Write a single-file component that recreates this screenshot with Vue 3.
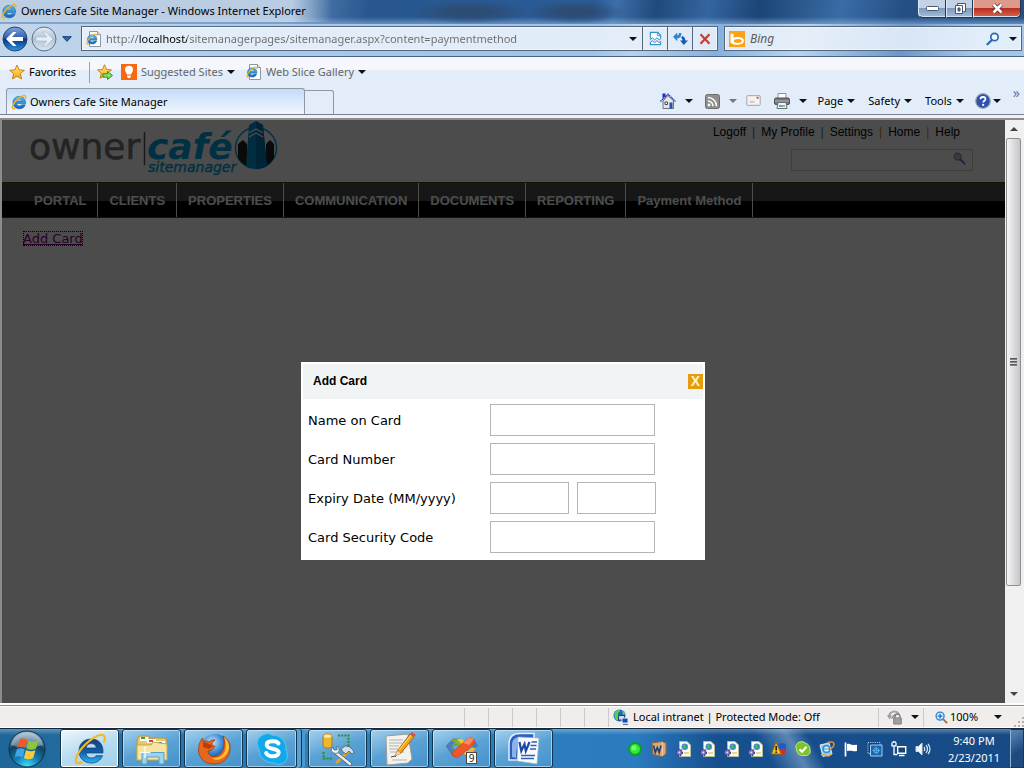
<script setup>
import { ref } from 'vue'

const url = ref('http://localhost/sitemanagerpages/sitemanager.aspx?content=paymentmethod')
const links = ['Logoff', 'My Profile', 'Settings', 'Home', 'Help']
const nav = ['PORTAL', 'CLIENTS', 'PROPERTIES', 'COMMUNICATION', 'DOCUMENTS', 'REPORTING', 'Payment Method']
const menus = ['Page', 'Safety', 'Tools']
const apps = [
  { id: 'ie', label: 'Internet Explorer', kind: 'active' },
  { id: 'folder', label: 'Windows Explorer', kind: '' },
  { id: 'firefox', label: 'Firefox', kind: '' },
  { id: 'skype', label: 'Skype', kind: 'stacked' },
  { id: 'tools', label: 'Database tools', kind: '' },
  { id: 'notes', label: 'Notes', kind: '' },
  { id: 'studio', label: 'Visual Studio', kind: '', badge: '9' },
  { id: 'word', label: 'Word', kind: '' }
]
const tray = ['dot', 'wbox', 'pagegear', 'pagegear', 'pagegear', 'pagegear', 'shield', 'check', 'paint', 'flag', 'chip', 'network', 'sound']
const name = ref('')
const number = ref('')
const month = ref('')
const year = ref('')
const code = ref('')
</script>

<template>
  <div class="screen">
    <svg class="defs" aria-hidden="true">
      <defs>
        <linearGradient id="blueBall" x1="0" y1="0" x2="0" y2="1">
          <stop offset="0" stop-color="#7fa6dc" /><stop offset=".45" stop-color="#2f5fb0" /><stop offset=".5" stop-color="#0b2f80" /><stop offset="1" stop-color="#2b9be8" />
        </linearGradient>
        <linearGradient id="greyBall" x1="0" y1="0" x2="0" y2="1">
          <stop offset="0" stop-color="#e4ebf2" /><stop offset=".5" stop-color="#b4c3d4" /><stop offset="1" stop-color="#d9e6f4" />
        </linearGradient>
        <linearGradient id="ieBlue" x1="0" y1="0" x2="0" y2="1">
          <stop offset="0" stop-color="#4fc3f2" /><stop offset="1" stop-color="#1560b8" />
        </linearGradient>
        <linearGradient id="ieDark" x1="0" y1="0" x2="0" y2="1">
          <stop offset="0" stop-color="#1a3f78" /><stop offset=".55" stop-color="#0f5fae" /><stop offset="1" stop-color="#2fb4f0" />
        </linearGradient>
        <linearGradient id="gold" x1="0" y1="0" x2="0" y2="1">
          <stop offset="0" stop-color="#ffe88a" /><stop offset="1" stop-color="#f5a510" />
        </linearGradient>
        <radialGradient id="orb" cx=".5" cy="1" r=".95">
          <stop offset="0" stop-color="#3fe6ff" /><stop offset=".35" stop-color="#1483b8" /><stop offset=".7" stop-color="#12405f" /><stop offset="1" stop-color="#8fb0c4" />
        </radialGradient>
        <radialGradient id="globe" cx=".4" cy=".3" r=".8">
          <stop offset="0" stop-color="#c4e6fa" /><stop offset=".5" stop-color="#2f7fd0" /><stop offset="1" stop-color="#0a2260" />
        </radialGradient>
      </defs>
      <symbol id="i-e" viewBox="0 0 16 16">
        <path d="M14.600 9.600H5.600c.2 1.500 1.200 2.300 2.800 2.300 1.200 0 2-.4 2.500-1.100h3.400c-.8 2.500-3 4-5.900 4-3.900 0-6.500-2.400-6.500-6.200 0-3.700 2.600-6.200 6.400-6.200 4 0 6.500 2.700 6.300 7.200zM5.700 7h5.300C10.800 5.700 9.800 5 8.400 5S6 5.700 5.700 7z" fill="url(#ieBlue)" stroke="#1c5ea8" stroke-width=".6" />
        <path d="M14.700 3.900c.4-1.800-.5-2.900-2.700-2.200C8.500 2.800 3.500 7.500 1.800 11.500c-1 2.400-.4 3.700 1.700 3.200" fill="none" stroke="#f2b21c" stroke-width="1.600" stroke-linecap="round" />
      </symbol>
      <symbol id="i-iepage" viewBox="0 0 16 16">
        <path d="M3.500.500h8l3 3v12h-11z" fill="#fff" stroke="#8c97a6" /><path d="M11.500.500v3h3" fill="#e3e7ec" stroke="#8c97a6" />
        <svg x="0" y="2" width="12" height="12"><use href="#i-e" /></svg>
      </symbol>
      <symbol id="i-star" viewBox="0 0 16 16">
        <path d="M8 1l2.100 4.800 5.200.500-4 3.400 1.300 5.200L8 12.200l-4.600 2.700 1.300-5.200-4-3.400 5.200-.500z" fill="url(#gold)" stroke="#c47a08" stroke-width=".9" stroke-linejoin="round" />
      </symbol>
      <symbol id="i-addstar" viewBox="0 0 16 16">
        <path d="M7.500.700l2 4.700 5 .500-3.800 3.300 1.200 5-4.400-2.600-4.400 2.600 1.200-5L.500 5.900l5-.500z" fill="url(#gold)" stroke="#c47a08" stroke-width=".9" />
        <path d="M6 9.800h4.500V7.500l5 4-5 4v-2.300H6z" fill="#8be05a" stroke="#1f8a1f" stroke-width=".9" />
      </symbol>
      <symbol id="i-bulb" viewBox="0 0 16 16">
        <path d="M0 0h16v16H0z" fill="#f8680c" /><path d="M8 1.800a4 4 0 0 0-4 4c0 2 1.500 2.900 1.900 4.700h4.200c.4-1.800 1.900-2.700 1.900-4.700a4 4 0 0 0-4-4z" fill="#fff" /><path d="M6.200 11.500h3.600v1.300L9 14H7l-.8-1.200z" fill="#fff" />
      </symbol>
      <symbol id="i-home" viewBox="0 0 16 16">
        <path d="M3 8v7.500h10.500V8L8 2.500z" fill="#e6e6e4" stroke="#6b7384" /><path d="M0.500 8.500L8 1.200l7.500 7.300" fill="none" stroke="#2a37b0" stroke-width="1.300" stroke-dasharray="1.500 .5" /><path d="M2.500.500h3v3l-3 2z" fill="#1c2fc4" /><path d="M5 9h2.500v2.500H5z" fill="#fff" stroke="#3c4658" /><path d="M9.500 9.500h3v6h-3z" fill="#1f55a8" />
      </symbol>
      <symbol id="i-rss" viewBox="0 0 16 16">
        <rect x="1.500" y="1.500" width="14" height="14" rx="2" fill="#8e8e8e" stroke="#6c6c6c" /><circle cx="5" cy="12" r="1.400" fill="#fff" /><path d="M3.800 8a5 5 0 0 1 5.200 5.200M3.800 4.500A8.700 8.700 0 0 1 12.500 13.200" fill="none" stroke="#fff" stroke-width="1.500" />
      </symbol>
      <symbol id="i-mail" viewBox="0 0 16 12">
        <rect x=".7" y=".7" width="14.600" height="10.600" rx="1" fill="#f5f1f0" stroke="#9aa0a8" /><path d="M11.500 2h2v2h-2z" fill="#d83a30" /><path d="M4 7.500h5" stroke="#c98c8c" />
      </symbol>
      <symbol id="i-print" viewBox="0 0 16 16">
        <path d="M4 .5h8V6H4z" fill="#fff" stroke="#8c8f94" /><rect x=".5" y="5" width="15" height="6.500" rx="1.500" fill="#74777c" stroke="#4c4f54" /><path d="M1 8h14" stroke="#b0b3b7" /><path d="M4 9.500h8l1 6H3z" fill="#f0f4f8" stroke="#6c7076" /><path d="M5 13h3" stroke="#2b82d0" stroke-width="1.500" /><path d="M8 13h3" stroke="#5cb85a" stroke-width="1.500" />
      </symbol>
      <symbol id="i-help" viewBox="0 0 16 16">
        <circle cx="8" cy="8" r="7.300" fill="#2d4fb0" stroke="#9aa2ae" stroke-width="1.200" /><path d="M5.500 6.200C5.500 4.600 6.600 4 8 4s2.500.800 2.500 2.100C10.500 7.700 8.200 7.700 8.200 9.500" fill="none" stroke="#fff" stroke-width="1.800" /><circle cx="8.200" cy="11.900" r="1.100" fill="#fff" />
      </symbol>
      <symbol id="i-broken" viewBox="0 0 14 16">
        <path d="M1.500 8V1.500h8l3 3V8M1.500 12v2.500h11V12" fill="#fff" stroke="#2f9ad0" stroke-width="1.300" /><path d="M9 1.500V5h3.500" fill="none" stroke="#2f9ad0" /><path d="M1 9.500l2.500-2.200L6 9.500l2.500-2.200L11 9.500l2-1.500M1 12.500l2.500-2.200L6 12.500l2.500-2.200 2.500 2.200 2-1.500" fill="none" stroke="#3c7eb4" />
      </symbol>
      <symbol id="i-refresh" viewBox="0 0 16 16">
        <path d="M0 6.200L4.500 1.500V4.500C5.500 4.400 6.300 3.600 6.500 2H9C9 5.500 7.500 7.700 4.500 7.900V11z" fill="#2f86d0" /><path d="M16 10L11.500 14.800 7.500 10H10C10 8.500 9.500 7.700 8.500 7.200L10 5.200C12.200 6 13.200 7.700 13.200 10z" fill="#1c5cb0" />
      </symbol>
      <symbol id="i-stop" viewBox="0 0 12 12">
        <path d="M1.500 1.200L10.500 10.800M10.500 1.200L1.500 10.800" stroke="#cf3a30" stroke-width="2.200" />
      </symbol>
      <symbol id="i-bing" viewBox="0 0 16 16">
        <path d="M0 0h16v16H0z" fill="#fba315" /><path d="M1.500 2.500v9c1.500 2 5 2.500 7.500 2.300 3.500-.2 6-1.700 6-4s-2.500-3.900-6-3.900c-1.800 0-3.500.3-4.500.8V3z" fill="#fff" /><ellipse cx="8.800" cy="9.900" rx="3.900" ry="1.900" fill="#fba315" />
      </symbol>
      <symbol id="i-mag" viewBox="0 0 14 14">
        <circle cx="8.500" cy="5" r="3.700" fill="#eef6ff" stroke="#2c68b4" stroke-width="1.700" /><path d="M5.800 7.900L1.500 12.300" stroke="#2c68b4" stroke-width="2.200" stroke-linecap="round" />
      </symbol>
      <symbol id="i-magr" viewBox="0 0 14 14">
        <circle cx="5" cy="5" r="3.700" fill="#b4c8e0" stroke="#8c9aac" stroke-width="1.500" /><path d="M8 8l4.500 4.500" stroke="#5c84b8" stroke-width="2.200" stroke-linecap="round" />
      </symbol>
      <symbol id="i-zoom" viewBox="0 0 14 14">
        <circle cx="5.500" cy="5.500" r="4.300" fill="#d9ecff" stroke="#3484d0" stroke-width="1.500" /><path d="M5.500 3v5M3 5.500h5" stroke="#1f6dc0" stroke-width="1.400" /><path d="M9 9l3.500 3.500" stroke="#9a7848" stroke-width="2.200" stroke-linecap="round" />
      </symbol>
      <symbol id="i-intranet" viewBox="0 0 16 16">
        <circle cx="6.500" cy="6.500" r="6" fill="#1c66c8" /><path d="M2 3c2-2 4-2 5-2 1 2-2 2-2 4s2 2 1 4-2 3-3 2C1 9 1 5 2 3zM9 2c2 0 3 2 4 3l-3 1z" fill="#56d04a" /><path d="M5.500 6.500h6v4.500h-6z" fill="#c6d8ee" stroke="#29405f" /><path d="M9 9h6v5H9z" fill="#1246c0" stroke="#e6ebf2" /><path d="M10 15.400h5" stroke="#5c6470" />
      </symbol>
      <symbol id="i-lock" viewBox="0 0 16 16">
        <path d="M2 7a5.500 5.500 0 0 1 10-2" fill="none" stroke="#a4a4a4" stroke-width="2" /><path d="M0 6l5 .5-2.500 4z" fill="#9c9c9c" /><path d="M8 5.500L4.500 9.500" stroke="#8c8c8c" stroke-width="1.500" /><path d="M8 9V7.500a2.500 2.500 0 0 1 5 0V9" fill="none" stroke="#7a7a7a" stroke-width="1.300" /><path d="M6.800 9h7.400v6H6.800z" fill="#b4b4b4" stroke="#747474" /><path d="M7 11h7M7 13h7" stroke="#8b8b8b" />
      </symbol>
      <symbol id="a-ie" viewBox="0 0 34 34">
        <path d="M30 21H13c.3 3.400 2.400 5 5.400 5 2.200 0 3.700-.800 4.600-2.300h6.500C27.800 28.300 23.800 31 18.400 31 11 31 6 26.200 6 19S10.900 7 18.300 7C26 7 30.500 12.300 30 21zM13.100 16h10.200c-.3-2.900-2.200-4.400-5-4.400s-4.700 1.500-5.200 4.400z" fill="url(#ieDark)" stroke="#123c70" stroke-width=".7" />
        <path d="M31 9.500C33 5 31.500 1.500 26 3.200 18 5.800 7 16.500 3.700 24.500 1.500 29.800 3 32.700 8.500 30.500" fill="none" stroke="#f4b822" stroke-width="2.200" stroke-linecap="round" />
      </symbol>
      <symbol id="a-folder" viewBox="0 0 34 34">
        <path d="M2 28V8l2-4h10l1 3 5-1h10l2 3v18z" fill="#e6c86a" stroke="#b8963c" /><path d="M5 5h8v4H5z" fill="#fff" /><path d="M6 5h4v2H6z" fill="#1fa83a" /><path d="M12 7h9v4h-9z" fill="#fff" /><path d="M14 8h4v2h-4z" fill="#d84030" /><path d="M20 9h10v4H20z" fill="#fff" /><path d="M23 10h4v2h-4z" fill="#2b8ad8" /><path d="M2 13h14l2-3 14 2v16H2z" fill="#f7e4a0" stroke="#c8a648" /><path d="M7 32V20.500h22V32h-5v-7H12v7z" fill="#9bd4ee" stroke="#5c9fc8" /><path d="M10 14v12M4.500 20.500h11" stroke="#fff" stroke-width="1.200" />
      </symbol>
      <symbol id="a-firefox" viewBox="0 0 34 34">
        <circle cx="18" cy="16" r="14" fill="url(#globe)" />
        <path d="M26 4c5 3 8 8 7 14-1 8-7 14-16 14C8 32 1.500 26 1.500 18c0-5 1.500-9 4-12l.5 3.500c2-.7 4-.7 6 .5 2-2 4-2.500 6-2-2 1.500-3 3-3 5l3 1.500-3 3.500-4 1c0 4 4 6.500 8.500 5 6-1.500 9.500-9 7-20z" fill="#e8681a" stroke="#9c3410" stroke-width=".7" />
        <path d="M27 5c6 5 7 13 1 19-4 4-9 5-14 2 7 1 13-2 14.500-9 .8-4 .2-8-1.500-12z" fill="#fac234" />
        <path d="M6 10c2 0 4 1 6 2l4 2-4 3-6-2z" fill="#b83c10" />
      </symbol>
      <symbol id="a-skype" viewBox="0 0 34 34">
        <path d="M10 2c3-1 5 0 7 1 9 0 15 7 14 15 2 4 2 9-1 12-3 3-8 3-11 1C10 31 4 25 4 17 1 13 1 5 10 2z" fill="#12a9ea" stroke="#5cc8f4" /><path d="M23.500 11.500c-1.500-3-12-3.500-11.800 1.500.2 5 12 2.500 12 7.500 0 4.800-10.500 5-12.500.5" fill="none" stroke="#fff" stroke-width="4" stroke-linecap="round" />
      </symbol>
      <symbol id="a-tools" viewBox="0 0 34 34">
        <rect x="2" y="2" width="9" height="14" rx="3" fill="#efb52c" stroke="#b37a10" /><ellipse cx="6.500" cy="4" rx="4" ry="1.800" fill="#ffe7a0" /><path d="M17 3.500h10.500V15M2.500 20v6.500H12" fill="none" stroke="#2e8a2a" stroke-width="2" stroke-dasharray="2 1.200" /><path d="M15 31L28 19" stroke="#e8a030" stroke-width="3" /><path d="M14 20l15 12" stroke="#58697c" stroke-width="4" stroke-linecap="round" /><path d="M14 20l15 12" stroke="#e6edf4" stroke-width="2.300" stroke-linecap="round" /><path d="M12 15l1 3 3 0 0-4c2 1 3 4 1 7-3 1-6 0-7-3z" fill="#eef3f8" stroke="#58697c" stroke-width=".8" /><path d="M22 20l-2-3 4-3c5 0 8 3 9 7l-2 1-3-3-3 3z" fill="#d3dde6" stroke="#4c5c6c" stroke-width=".8" />
      </symbol>
      <symbol id="a-notes" viewBox="0 0 34 34">
        <path d="M3 4l22-2 4 25-4 4-21 2z" fill="#f3f2ee" stroke="#9c9c96" /><path d="M6 8h14M6 11h13M6 14h10M6 17h9M7 20h14M9 28h15" stroke="#b4b4ae" stroke-width="1.200" /><path d="M12 24l3-6L27 2l4 3-13 16z" fill="#f3a51c" stroke="#a8640c" /><path d="M27 2l2-2 4 3-2 2z" fill="#dc5048" /><path d="M16 18l12-15" stroke="#ffe08a" /><path d="M12 24l2.500-5 3 2.500z" fill="#f0d8b0" /><path d="M8 25l4-1 1 1" fill="none" stroke="#4c4c48" />
      </symbol>
      <symbol id="a-studio" viewBox="0 0 34 34">
        <path d="M1 14l7-7h7l4 4-5 4-3-3-4 3 5 6-3 4H9z" fill="#7fb238" stroke="#55822a" stroke-width=".7" /><path d="M1 14l5-5 4 1-4 5 5 5-3 4z" fill="#4c7cc4" /><path d="M12 7h5l4 4-3 3z" fill="#f5c52f" />
        <path d="M19 24l4-4 3 1 3-5-4-4 3-5 5 6-7 11z" fill="#4580c0" /><path d="M16 19l4 4h6l5-7-5 0-3 3z" fill="#f3b72c" />
        <path d="M8 20L22 7q4-3 7 0 2 3-1 6L15 24q-4 3-7 0-2-2 0-4z" fill="#f0562a" stroke="#c43a18" stroke-width=".6" /><path d="M22 7q4-3 7 0l-5 6q-2-1-6-2z" fill="#f98a60" />
      </symbol>
      <symbol id="a-word" viewBox="0 0 34 34">
        <path d="M2 28V12C2 5 6 1.500 13 1.500h14V28z" fill="#2c5fc0" stroke="#e4eefa" stroke-width="1.500" /><path d="M5 25V13c0-5 3-8 8-8h3C11 9 9 16 9 26z" fill="#8ab4ec" /><path d="M11 5l21 1-2 26-20-3z" fill="#f8fafc" stroke="#9fb3cc" stroke-width=".7" /><path d="M12.500 10l1.800 9 3.200-7 1.300 7 3.700-9" fill="none" stroke="#1c48a0" stroke-width="2.200" /><path d="M24.500 10h5.500M23.500 13.500h6M23 17h6M14 23.500h14M14 26.500h13" stroke="#3460b4" stroke-width="1.500" />
      </symbol>
      <symbol id="t-dot" viewBox="0 0 16 16"><circle cx="8" cy="8" r="7" fill="#0f9c2e" /><circle cx="8" cy="8" r="5" fill="#2cec38" /><circle cx="7" cy="7" r="2.500" fill="#7dff7a" /></symbol>
      <symbol id="t-wbox" viewBox="0 0 16 16"><path d="M1 2l10-1.500 4 1.500v11l-4 2.500-9-2z" fill="#dca878" stroke="#9a6438" /><path d="M11.500 1v14" stroke="#f0c8a0" /><path d="M2.500 4.500l1.800 7 2-5 1.900 5 1.800-7" fill="none" stroke="#23406c" stroke-width="1.600" /></symbol>
      <symbol id="t-pagegear" viewBox="0 0 16 16"><path d="M4.500 .5H12l3.500 3.500v11.500h-11z" fill="#fbfaf0" stroke="#b8b89c" /><circle cx="9.800" cy="5.800" r="3.200" fill="#3c90c8" /><path d="M8 4c1-1 2 0 3 1l-2 3z" fill="#58b050" /><path d="M9 12h5" stroke="#e0dc90" stroke-width="2" /><circle cx="4.300" cy="11.500" r="3" fill="#7478c8" stroke="#3a3c88" stroke-width="1.500" stroke-dasharray="1.500 1" /><circle cx="4.300" cy="11.500" r="1" fill="#dde" /></symbol>
      <symbol id="t-shield" viewBox="0 0 16 16"><path d="M8 3l3.500-1L15 3v5H8z" fill="#2458c8" /><path d="M8 8h7c0 4-2 6-4 7-2-1-3-3-3-7z" fill="#d82c20" /><path d="M5 1L.5 13h9.800z" fill="#f8c022" stroke="#9c6c08" /><path d="M5.200 5v4.500M5.200 10.500V12" stroke="#2c2410" stroke-width="1.600" /></symbol>
      <symbol id="t-check" viewBox="0 0 16 16"><path d="M5 1c2-1 4 0 5 1 4 1 5 4 5 7 1 3-1 6-5 5.500C5 15 2 13 1.500 8.500 0 5 1.500 1.500 5 1z" fill="#7cc32c" stroke="#c4ea8c" /><path d="M4.500 8.200L7 10.700l4.500-5" fill="none" stroke="#fff" stroke-width="2.100" /></symbol>
      <symbol id="t-paint" viewBox="0 0 16 16"><path d="M1 4l9-2 3 11-9 2.500z" fill="#8cc8ec" stroke="#e8f0f8" /><circle cx="7.500" cy="8" r="3.300" fill="#e8f6fe" stroke="#2b8cd8" stroke-width="1.500" /><path d="M4.500 8h6" stroke="#2b8cd8" /><path d="M2 13.500l7 1.500 4-2" stroke="#f8a838" stroke-width="1.500" fill="none" /><path d="M8 2c4-2 7-1 7 1s-2 4-4 5" fill="none" stroke="#e09038" stroke-width="1.500" /></symbol>
      <symbol id="t-flag" viewBox="0 0 16 16"><path d="M2.500 1.500v14" stroke="#fff" stroke-width="1.700" /><path d="M4 3c3-1 4 1 6 1l4-.3v6.300c-4 .7-5-1-10 0z" fill="#fff" /></symbol>
      <symbol id="t-chip" viewBox="0 0 16 16"><path d="M1 1.500h12v11H1z" fill="#0d4080" stroke="#9cc4ec" stroke-dasharray="1.300 .9" /><path d="M3.500 4h11.500v11H3.500z" fill="#1766b0" stroke="#a5cdf0" /><circle cx="9.200" cy="9.500" r="2.500" fill="none" stroke="#66b4ec" /><path d="M5.500 9.500h7.500M9.200 6v7" stroke="#66b4ec" stroke-width=".8" /></symbol>
      <symbol id="t-network" viewBox="0 0 16 16"><path d="M6.700 5.700h8v6.600h-8z" fill="#1b4370" stroke="#fff" stroke-width="1.400" /><path d="M8 14.500h5.500M1 1.500v3.300h4V1.500M2.300 0v2M4 0v2M3 5v8.500h3.500" fill="none" stroke="#fff" stroke-width="1.300" /></symbol>
      <symbol id="t-sound" viewBox="0 0 16 16"><path d="M1 5.500h2.500L7 2v12l-3.500-3.500H1z" fill="#f6f8fa" stroke="#d4dce6" /><path d="M9 6q1.500 2 0 4M11 4.200q3 3.800 0 7.600M13 2.800q4 5.200 0 10.400" fill="none" stroke="#e3ebf4" stroke-width="1.200" /></symbol>
    </svg>

    <header class="titlebar">
      <div class="caption"><svg class="ic16"><use href="#i-e" /></svg><span>Owners Cafe Site Manager - Windows Internet Explorer</span></div>
      <div class="winbtns">
        <button class="wb" aria-label="Minimize"><svg width="13" height="5"><rect x=".5" y=".5" width="12" height="4" rx="1" fill="#fff" stroke="#4c5a6e" /></svg></button>
        <button class="wb" aria-label="Restore"><svg width="12" height="12"><path d="M3.500.500h8v8h-2M3.500.500v2" fill="#fff" stroke="#47566c" /><path d="M1.500 2.500h7v8h-7z" fill="#fff" stroke="#47566c" /><path d="M4 5h2v3H4z" fill="#587090" stroke="#47566c" /></svg></button>
        <button class="wb close" aria-label="Close"><svg width="13" height="11"><path d="M2.500 1.500l8 8M10.500 1.500l-8 8" stroke="#5a3030" stroke-width="4.200" /><path d="M2.500 1.500l8 8M10.500 1.500l-8 8" stroke="#fff" stroke-width="2.600" /></svg></button>
      </div>
    </header>

    <div class="addressrow">
      <div class="history">
        <button aria-label="Back"><svg width="26" height="26" viewBox="0 0 26 26"><circle cx="13" cy="13" r="12" fill="url(#blueBall)" stroke="#2c4468" /><path d="M4 13l7-7h3.500l-4.500 5H21v4H10l4.500 5H11z" fill="#fff" /></svg></button>
        <button aria-label="Forward"><svg width="26" height="26" viewBox="0 0 26 26"><circle cx="13" cy="13" r="12" fill="url(#greyBall)" stroke="#5c7088" /><path d="M22 13l-7-7h-3.500l4.500 5H5v4h11l-4.500 5H15z" fill="#e6eef6" stroke="#a9bacd" stroke-width=".7" /></svg></button>
        <button class="recent" aria-label="Recent pages"><svg width="10" height="6"><path d="M.7.700h8.600L5 5.300z" fill="#2c6cb4" stroke="#143c70" /></svg></button>
      </div>
      <div class="addr">
        <svg class="ic16"><use href="#i-iepage" /></svg>
        <input v-model="url" class="url" aria-label="Address" />
        <button class="drop" aria-label="Show addresses"><i class="tri"></i></button>
        <button class="ab" aria-label="Compatibility view"><svg width="13" height="15"><use href="#i-broken" /></svg></button>
        <button class="ab" aria-label="Refresh"><svg width="15" height="15"><use href="#i-refresh" /></svg></button>
        <button class="ab" aria-label="Stop"><svg width="12" height="12"><use href="#i-stop" /></svg></button>
      </div>
      <div class="bing">
        <svg class="ic16"><use href="#i-bing" /></svg>
        <input placeholder="Bing" aria-label="Search" />
        <button class="go" aria-label="Go"><svg width="14" height="14"><use href="#i-mag" /></svg></button>
        <button aria-label="Search options"><i class="tri"></i></button>
      </div>
    </div>

    <div class="toolbars">
      <div class="favbar">
        <button class="fav"><svg class="ic16"><use href="#i-star" /></svg>Favorites</button>
        <button class="addfav" aria-label="Add to favorites"><svg class="ic16"><use href="#i-addstar" /></svg></button>
        <button class="site"><svg class="ic16"><use href="#i-bulb" /></svg>Suggested Sites<i class="tri"></i></button>
        <button class="site"><svg class="ic16"><use href="#i-iepage" /></svg>Web Slice Gallery<i class="tri"></i></button>
      </div>
      <div class="tabrow">
        <button class="tab"><svg class="ic16"><use href="#i-e" /></svg>Owners Cafe Site Manager</button>
        <button class="newtab" aria-label="New tab"></button>
        <div class="cmd">
          <button class="split" aria-label="Home"><svg class="ic16"><use href="#i-home" /></svg><i class="tri"></i></button>
          <button class="split" aria-label="Feeds"><svg class="ic16"><use href="#i-rss" /></svg><i class="tri dim"></i></button>
          <button class="mail" aria-label="Mail"><svg width="15" height="11"><use href="#i-mail" /></svg></button>
          <button class="split" aria-label="Print"><svg class="ic16"><use href="#i-print" /></svg><i class="tri"></i></button>
          <button v-for="m in menus" :key="m" class="menu">{{ m }}<i class="tri"></i></button>
          <button class="help" aria-label="Help"><svg class="ic16"><use href="#i-help" /></svg><i class="tri"></i></button>
          <span class="more">»</span>
        </div>
      </div>
    </div>

    <main class="viewport">
      <div class="page">
        <div class="head">
          <svg class="logo" width="252" height="60" viewBox="0 0 252 60" role="img" aria-label="owner café sitemanager">
            <text x="0" y="39" class="l-owner">owner</text>
            <path d="M115.500 12v33" stroke="#555" stroke-width="1.500" />
            <text x="118" y="39" class="l-cafe">café</text>
            <text x="119" y="52" class="l-sub">sitemanager</text>
            <circle cx="227" cy="28" r="20.500" fill="none" stroke="#00a8ec" stroke-width="1.500" />
            <path d="M209 38V24l5-4 4 4v22q-6-3-9-8zM237 46V24l4-4 4 4v14q-3 5-8 8z" fill="#222" />
            <path d="M217 46L220 5l7-4 7 4 4 41q-11 5-21 0z" fill="#0096d8" />
            <path d="M227 1v48q6 0 11-3L234 5z" fill="#0078b4" />
            <path d="M220 13l7-4 7 4M220 17l7-4 7 4" fill="none" stroke="#fff" stroke-width="1.200" />
          </svg>
          <div class="tools">
            <nav class="links"><template v-for="(l, i) in links" :key="l"><span v-if="i" class="bar" :class="{ warm: i > 2 }">|</span><a href="#">{{ l }}</a></template></nav>
            <div class="search"><input aria-label="Search site" /><svg width="13" height="13"><use href="#i-magr" /></svg></div>
          </div>
        </div>
        <nav class="nav"><a v-for="n in nav" :key="n" href="#">{{ n }}</a></nav>
        <div class="body"><a class="addcard" href="#">Add Card</a></div>
        <div class="shade">
          <form class="modal" role="dialog" aria-labelledby="dlg-title" @submit.prevent>
            <div class="mhead"><h2 id="dlg-title">Add Card</h2><button type="button" class="x">X</button></div>
            <div class="fields">
              <label for="f-name">Name on Card</label><input id="f-name" v-model="name" />
              <label for="f-num">Card Number</label><input id="f-num" v-model="number" />
              <label for="f-mm">Expiry Date (MM/yyyy)</label>
              <div class="pair"><input id="f-mm" v-model="month" /><input v-model="year" aria-label="Expiry year" /></div>
              <label for="f-code">Card Security Code</label><input id="f-code" v-model="code" />
            </div>
          </form>
        </div>
      </div>
      <div class="scroll" aria-hidden="true">
        <div class="arrow"><i class="up"></i></div>
        <div class="thumb"><i></i><i></i><i></i></div>
        <div class="track"></div>
        <div class="arrow"><i class="down"></i></div>
      </div>
    </main>

    <footer class="status">
      <div class="cells"><i v-for="n in 6" :key="n"></i></div>
      <div class="zone"><svg class="ic16"><use href="#i-intranet" /></svg>Local intranet | Protected Mode: Off</div>
      <div class="prot"><svg class="ic16"><use href="#i-lock" /></svg><i class="tri"></i></div>
      <div class="zoomlvl"><svg width="13" height="13"><use href="#i-zoom" /></svg><span>100%</span><i class="tri"></i></div>
      <svg class="grip" width="10" height="10"><path d="M8 1h2M8 5h2M4 5h2M8 9h2M4 9h2M0 9h2" stroke="#b4b0b0" stroke-width="2" /></svg>
    </footer>

    <div class="taskbar">
      <button class="start" aria-label="Start">
        <svg width="38" height="38" viewBox="0 0 38 38"><circle cx="19" cy="19" r="18" fill="url(#orb)" stroke="#0d3048" /><path d="M3 15a16.500 16.500 0 0 1 32 0q-16 5-32 0z" fill="#fff" opacity=".35" /><path d="M12 9q4-2 7 1l-2 8q-4-3-8 0z" fill="#ef5a28" /><path d="M20.500 10.500q4 2.500 10 0l-2.500 8q-5 2.500-9.500 0z" fill="#8cc63e" /><path d="M8.700 19.500q4-2.500 8 0l-2 8q-4-2.500-8 0z" fill="#42a4e8" /><path d="M18 20q5 2.500 9.500 0l-2.300 8q-5 2.500-9.200 0z" fill="#fcca3a" /></svg>
      </button>
      <div class="apps">
        <button v-for="a in apps" :key="a.id" class="app" :class="a.kind" :aria-label="a.label"><svg width="34" height="34"><use :href="'#a-' + a.id" /></svg><span v-if="a.badge" class="badge">{{ a.badge }}</span></button>
      </div>
      <div class="tray"><svg v-for="(t, i) in tray" :key="i" class="ic16"><use :href="'#t-' + t" /></svg></div>
      <div class="clock"><span>9:40 PM</span><span>2/23/2011</span></div>
      <button class="desk" aria-label="Show desktop"></button>
    </div>
  </div>
</template>

<style>
body { background: #fff; }
html, body { overflow: hidden; }
</style>

<style scoped>
* { box-sizing: border-box; }
.screen { height: 100vh; min-height: 600px; display: flex; flex-direction: column; font: 12px/16px "Noto Sans", "Open Sans", sans-serif; color: #000; background: #eef2f6; overflow: hidden; }
.defs { position: absolute; width: 0; height: 0; }
button { font: inherit; color: inherit; border: 0; padding: 0; background: none; display: flex; align-items: center; justify-content: center; white-space: nowrap; }
input { font: inherit; border: 0; padding: 0; background: transparent; outline: 0; min-width: 0; }
svg { display: block; flex: none; }
.ic16 { width: 16px; height: 16px; }
.tri { width: 0; height: 0; border: 4px solid transparent; border-top-color: #111; border-bottom: 0; flex: none; }
.dim { border-top-color: #777; }

.titlebar { height: 24px; flex: none; display: flex; justify-content: space-between; align-items: flex-start; background: radial-gradient(ellipse 60px 12px at 470px 12px, #2c4c74 30%, transparent), radial-gradient(ellipse 50px 12px at 575px 12px, #2c4c74 30%, transparent), linear-gradient(transparent 17px, rgba(150, 190, 230, .55)), linear-gradient(100deg, #6b90bc 0, #5d86b6 28%, #28578f 36%, #2a5c98 58%, #3d6fa8 60%, #1f4a7c 64%, #3565a0 69%, #1c4576 74%, #3a6ca6 82%, #244f85 88%); }
.caption { display: flex; align-items: center; gap: 4px; height: 22px; padding: 0 26px 0 1px; font-size: 11px; background: linear-gradient(90deg, rgba(215, 227, 241, .75) 88%, transparent); }
.winbtns { display: flex; margin-right: 3px; }
.wb { width: 27px; height: 18px; border: 1px solid #22364e; border-top: 0; border-left-color: #dce8f4; background: linear-gradient(#c3d2e4 0 45%, #7e9abc 50%, #a4bcd8); box-shadow: inset 0 -1px #d4e2f0; }
.wb:first-child { width: 28px; border-radius: 0 0 0 5px; }
.close { width: 48px; border-radius: 0 0 5px 0; background: linear-gradient(#dd9a8c 0 45%, #b83022 50%, #d8664c); }

.addressrow { height: 33px; flex: none; display: flex; align-items: flex-start; gap: 6px; padding: 2px 2px 0 2px; border-bottom: 1px solid #4b6484; background: linear-gradient(105deg, #c3d6ea 0, #a9c8ea 30%, #9fc2ea 58%, #b9d0e9 62%, #87b0de 70%, #b9d3ee 78%, #6a98cc 88%, #a4c5ea 95%); }
.history { display: flex; align-items: center; gap: 3px; width: 73px; height: 25px; }
.recent { margin-left: 2px; }
.addr, .bing { display: flex; align-items: center; height: 25px; background: rgba(236, 243, 251, .85); border: 1px solid #56677c; box-shadow: inset 0 0 0 1px rgba(255, 255, 255, .5); }
.addr { flex: 1; padding-left: 4px; }
.url { flex: 1; height: 23px; margin-left: 4px; font-size: 11px; color: transparent; caret-color: #000; background: linear-gradient(90deg, #6c6c6c 0 33px, #000 33px 81px, #6c6c6c 81px); -webkit-background-clip: text; background-clip: text; }
.drop { width: 18px; height: 23px; }
.ab { width: 25px; height: 23px; border-left: 1px solid #56677c; }
.bing { width: 298px; padding-left: 4px; }
.bing input { flex: 1; height: 23px; margin-left: 5px; font-style: italic; }
.bing input::placeholder { color: #5c5c5c; opacity: 1; }
.bing button { width: 16px; height: 23px; }
.bing .go { width: 24px; }

.toolbars { flex: none; background: linear-gradient(#f5f7fd 0 13px, #e2edf9 13px); border-bottom: 1px solid #7a828c; }
.favbar { display: flex; align-items: center; height: 30px; padding-left: 9px; font-size: 11px; }
.favbar button { gap: 4px; }
.fav { padding-right: 13px; }
.addfav { border-left: 1px solid #9aa2ac; height: 21px; padding: 0 8px 0 7px; }
.site { color: #666; margin-right: 11px; }
.tabrow { display: flex; align-items: flex-end; height: 27px; padding-left: 6px; font-size: 11px; }
.tab { width: 299px; height: 26px; justify-content: flex-start; gap: 3px; padding-left: 4px; border: 1px solid #8e99a8; border-bottom: 0; border-radius: 3px 3px 0 0; background: linear-gradient(#c3dcf9, #f0f6fd); }
.newtab { width: 29px; height: 24px; border: 1px solid #8e99a8; border-bottom: 0; border-left: 0; border-radius: 0 3px 0 0; }
.cmd { margin-left: auto; display: flex; align-items: center; height: 27px; padding-right: 4px; }
.split { gap: 9px; margin-right: 11px; }
.mail { margin: 0 13px 0 -2px; }
.menu { gap: 4px; margin-right: 13px; }
.help { gap: 2px; margin-left: -2px; }
.more { color: #6472a8; margin-left: 12px; height: 27px; line-height: 12px; font-size: 14px; }

.viewport { flex: 1; min-height: 0; display: flex; margin-top: 3px; border: 2px solid #8c8c8c; border-right: 0; border-bottom: 0; }
.page { flex: 1; position: relative; background: #fff; overflow: hidden; min-width: 0; }
.head { height: 62px; display: flex; justify-content: space-between; }
.logo { margin-left: 27px; }
.l-owner { font: 36px "DejaVu Sans", sans-serif; fill: #777; stroke: #777; stroke-width: .6px; }
.l-cafe { font: italic bold 36px "DejaVu Sans", sans-serif; fill: #00a4e0; }
.l-sub { font: italic 14px "DejaVu Sans", sans-serif; fill: #00a4e0; stroke: #00a4e0; stroke-width: .4px; }
.tools { display: flex; flex-direction: column; align-items: flex-end; padding: 4px 32px 0 0; }
.links { display: flex; gap: 6px; padding-right: 13px; font: 12px/16px "Liberation Sans", Arial, sans-serif; }
.links a { color: #000; text-decoration: none; }
.bar { color: #36709c; }
.warm { color: #d88820; }
.search { display: flex; align-items: flex-start; width: 182px; height: 22px; margin-top: 9px; padding: 2px 6px 0 4px; border: 1px solid #ccc; }
.search input { flex: 1; height: 18px; }
.nav { display: flex; height: 36px; padding-left: 21px; border: solid #444400; border-width: 1px 0; background: linear-gradient(#4f4f4f 0 18px, #000 18px); font: bold 13px/35px "Liberation Sans", Arial, sans-serif; }
.nav a { padding: 0 11px; border-right: 1px solid #fff; color: #fff; text-decoration: none; white-space: nowrap; }
.body { padding: 14px 21px; font: 13px/14px "DejaVu Sans", Verdana, sans-serif; }
.addcard { color: #800080; outline: 1px dotted #000; outline-offset: -1px; }
.shade { position: absolute; inset: 0; display: flex; align-items: center; justify-content: center; padding: 98px 1px 0 0; background: rgba(0, 0, 0, .7); }
.modal { width: 404px; padding: 2px; background: #fff; font: 13px/16px "DejaVu Sans", Verdana, sans-serif; }
.mhead { display: flex; align-items: center; justify-content: space-between; height: 35px; padding-left: 10px; background: #f0f4f5; }
.mhead h2 { margin: 0; font: bold 12px/16px "Liberation Sans", Arial, sans-serif; }
.x { width: 15px; height: 15px; background: #e69c0c; color: #fff3d0; font: bold 14px/15px "Liberation Sans", Arial, sans-serif; }
.fields { display: grid; grid-template-columns: 182px 166px; row-gap: 7px; align-items: center; padding: 5px 0 5px 5px; }
.fields label { padding-top: 2px; }
.fields input { width: 165px; height: 32px; border: 1px solid #b5b5b5; background: #fff; padding: 0 4px; }
.pair { display: flex; gap: 8px; }
.fields .pair input { width: 79px; }

.scroll { width: 19px; display: flex; flex-direction: column; padding: 0 3px 0 1px; background: #f0f0f0; }
.arrow { height: 18px; display: flex; align-items: center; justify-content: center; }
.up, .down { width: 0; height: 0; border: 4px solid transparent; }
.up { border-top: 0; border-bottom-color: #444; }
.down { border-bottom: 0; border-top-color: #444; }
.thumb { flex: 448; display: flex; flex-direction: column; align-items: center; justify-content: center; gap: 1px; border: 1px solid #8f8f8f; border-radius: 2px; background: linear-gradient(90deg, #f6f6f6, #dcdce0 50%, #c4c6ca); }
.thumb i { width: 7px; height: 2px; background: linear-gradient(#444, #999); }
.track { flex: 99; }

.status { height: 25px; flex: none; display: flex; align-items: center; border-top: 2px solid #fff; border-bottom: 1px solid #fff; background: #f0edec; box-shadow: inset 0 1px #8a8a8a, inset 0 2px #fff; font-size: 11px; }
.cells { flex: 1; display: flex; justify-content: flex-end; }
.cells i { width: 24px; height: 19px; border-left: 1px solid #cdc9c9; }
.zone { display: flex; align-items: center; gap: 4px; width: 270px; height: 19px; padding-left: 4px; border-left: 1px solid #cdc9c9; }
.prot, .zoomlvl { display: flex; align-items: center; height: 19px; border-left: 1px solid #cdc9c9; }
.cells i, .zone, .prot, .zoomlvl { margin-top: 2px; }
.prot { width: 45px; padding-left: 8px; gap: 8px; }
.zoomlvl { width: 101px; padding-left: 11px; }
.zoomlvl span { flex: 1; padding-left: 2px; }
.zoomlvl i { margin-right: 22px; }
.grip { margin-left: -10px; align-self: flex-end; }

.taskbar { height: 40px; flex: none; display: flex; align-items: stretch; color: #fff; border-top: 1px solid #11283e; background: linear-gradient(rgba(255, 255, 255, .3), transparent 6px), linear-gradient(60deg, transparent 74%, rgba(190, 215, 240, .4) 77%, transparent 79%), linear-gradient(90deg, #1f6698, #2c7fb8 30%, #2a7cc0 62%, #16508f 70%, #174a84 100%); }
.start { width: 54px; }
.apps { display: flex; gap: 3px; flex: 1; padding-left: 6px; }
.app { position: relative; width: 59px; border: 1px solid #12344f; border-radius: 3px; box-shadow: inset 0 0 0 1px rgba(220, 238, 252, .6); background: linear-gradient(160deg, #a4d0ee, #5aa2d4 50%, #4392cc); }
.badge { position: absolute; right: 13px; bottom: 3px; width: 11px; height: 12px; border: 1px solid #504840; background: #fff; color: #222; font-size: 10px; line-height: 10px; }
.active { background: linear-gradient(160deg, #f0f7fc, #b8dcf0 50%, #a0d0ec); box-shadow: inset 0 0 0 1px #fff; }
.stacked { width: 51px; margin-right: 8px; box-shadow: inset 0 0 0 1px rgba(220, 238, 252, .6), 4px 0 #5aa2d4, 5px 0 #12344f, 8px 0 #4b98cc; }
.tray { display: flex; align-items: center; gap: 8px; }
.clock { width: 79px; display: flex; flex-direction: column; justify-content: center; align-items: center; padding-left: 7px; font-size: 11px; line-height: 17px; }
.desk { width: 14px; border: 1px solid #143860; border-left-color: #8fb0d0; background: linear-gradient(150deg, #5c88b8, #1f4a80 60%); }
</style>
